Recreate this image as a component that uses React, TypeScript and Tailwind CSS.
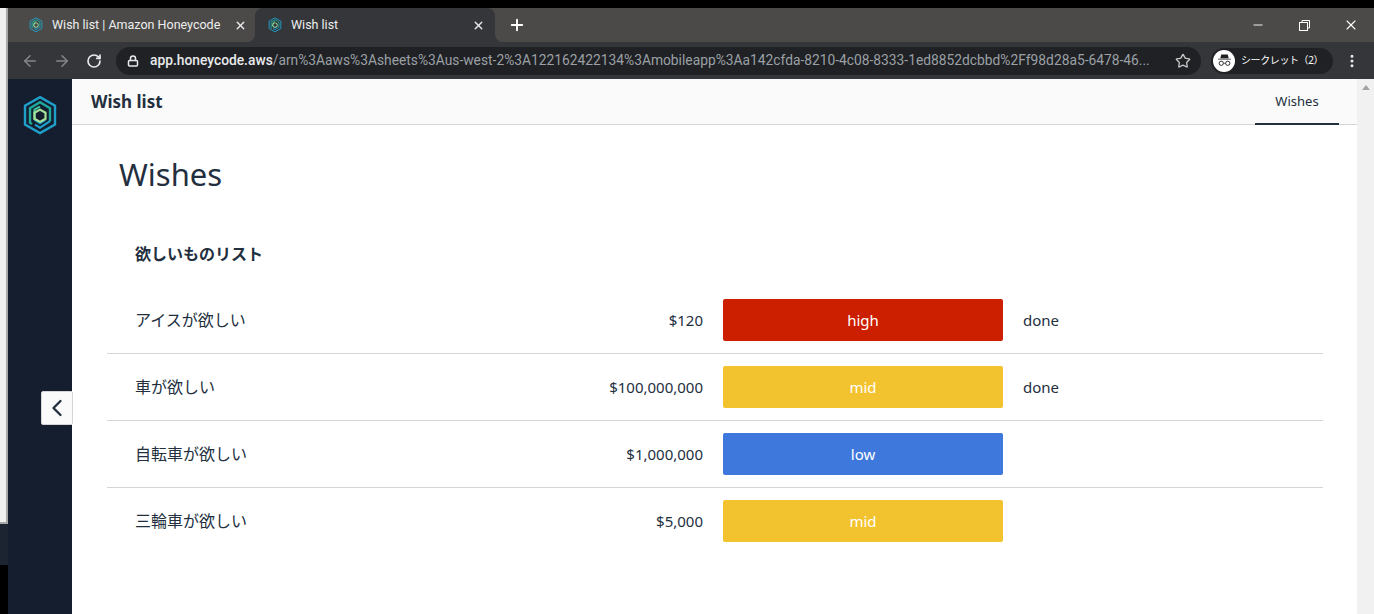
import { ArrowLeft, ArrowRight, ChevronLeft, EllipsisVertical, Lock, Minus, Plus, RotateCw, Star, X } from 'lucide-react';

const FONT = "font-['Noto_Sans','Noto_Sans_CJK_JP',sans-serif]";

const rows = [
  { name: 'アイスが欲しい', price: '$120', level: 'high', color: 'bg-[#cc1f00]', done: true },
  { name: '車が欲しい', price: '$100,000,000', level: 'mid', color: 'bg-[#f3c32f]', done: true },
  { name: '自転車が欲しい', price: '$1,000,000', level: 'low', color: 'bg-[#3e78dc]', done: false },
  { name: '三輪車が欲しい', price: '$5,000', level: 'mid', color: 'bg-[#f3c32f]', done: false },
];

function HexLogo({ size }: { size: number }) {
  return (
    <svg width={size} height={size * 1.12} viewBox="0 0 36 40" fill="none">
      <path d="M18 2 L33 10.5 V29.5 L18 38 L3 29.5 V10.5 Z" stroke="#1f9fc9" strokeWidth="2.4" />
      <path d="M10 29 L8 27.5 V13 L18 7 L28 13 V26" stroke="#1fa89c" strokeWidth="2.4" />
      <path d="M12.5 24.5 L18 28 L23.5 24.5 M28 26 L18 32.5 L13 29.5" stroke="#1f9fc9" strokeWidth="2.2" />
      <path d="M12.5 24.5 V14.5 L18 11.5" stroke="#3fc6a0" strokeWidth="2.2" />
      <path d="M18 14.5 L23.5 17.6 V23.6 L18 26.7 L12.5 23.6 V17.6 Z" stroke="#a6e29a" strokeWidth="2.2" />
    </svg>
  );
}

function Tab({ title, active }: { title: string; active?: boolean }) {
  return (
    <div
      className={`relative flex items-center h-[34px] font-['Roboto',sans-serif] text-[12.5px] text-[#eeeeee] ${
        active ? 'w-[240px] pl-[13px] pr-[10px] bg-[#35363a] rounded-t-lg' : 'w-[247px] pl-[21px] pr-[8px]'
      }`}
    >
      <HexLogo size={14} />
      <span className="ml-[9px] flex-1 whitespace-nowrap pt-[1px]">{title}</span>
      <X size={13} strokeWidth={2.5} className="text-[#e8eaed]" />
      {active && (
        <>
          <div className="absolute -left-[8px] bottom-0 w-[8px] h-[8px] bg-[#35363a]">
            <div className="w-full h-full bg-[#4b4a48] rounded-br-lg" />
          </div>
          <div className="absolute -right-[8px] bottom-0 w-[8px] h-[8px] bg-[#35363a]">
            <div className="w-full h-full bg-[#4b4a48] rounded-bl-lg" />
          </div>
        </>
      )}
    </div>
  );
}

function ChromeBar() {
  return (
    <div className="shrink-0">
      <div className="h-[34px] bg-[#4b4a48] flex items-center">
        <Tab title="Wish list | Amazon Honeycode" />
        <Tab title="Wish list" active />
        <Plus size={18} strokeWidth={2.5} className="ml-[13px] text-white" />
        <div className="flex-1" />
        <Minus size={14} strokeWidth={1.6} className="text-white" />
        <svg width="11" height="11" viewBox="0 0 11 11" fill="none" stroke="white" className="ml-[34px]">
          <rect x="0.5" y="2.5" width="8" height="8" />
          <path d="M3 2.5 V0.5 H10.5 V8 H8.5" />
        </svg>
        <X size={16} strokeWidth={1.6} className="ml-[33px] mr-[15px] text-white" />
      </div>
      <div className="h-[37px] bg-[#35363a] flex items-center">
        <ArrowLeft size={18} className="ml-[13px] text-[#85878a]" />
        <ArrowRight size={18} className="ml-[14px] text-[#85878a]" />
        <RotateCw size={16} strokeWidth={2.5} className="ml-[15px] text-[#e8eaed]" />
        <div className="ml-[14px] h-[28px] w-[1085px] rounded-full bg-[#202124] flex items-center pl-[11px] pr-[10px] font-['Roboto',sans-serif] text-[13.8px]">
          <Lock size={12} strokeWidth={3} className="text-[#e8eaed] shrink-0" />
          <span className="ml-[11px] flex-1 min-w-0 overflow-hidden whitespace-nowrap text-[#9aa0a6]">
            <span className="text-[#e8eaed] font-medium">app.honeycode.aws</span>
            /arn%3Aaws%3Asheets%3Aus-west-2%3A122162422134%3Amobileapp%3Aa142cfda-8210-4c08-8333-1ed8852dcbbd%2Ff98d28a5-6478-46...
          </span>
          <Star size={16} className="ml-[16px] text-[#c4c7c5] shrink-0" />
        </div>
        <div className="ml-[10px] h-[26px] w-[122px] rounded-full bg-[#202124] flex items-center pl-[2px] text-[10px] tracking-[-0.4px] text-white">
          <div className="w-[22px] h-[22px] rounded-full bg-white flex items-center justify-center">
            <svg width="15" height="13" viewBox="0 0 16 14" fill="none">
              <path d="M4.5 0.5 H11.5 L12.5 4.5 H3.5 Z M1 5 H15 V6 H1 Z" fill="#202124" />
              <circle cx="4.5" cy="10" r="2.3" stroke="#202124" strokeWidth="1" />
              <circle cx="11.5" cy="10" r="2.3" stroke="#202124" strokeWidth="1" />
              <path d="M7 10 H9" stroke="#202124" strokeWidth="0.8" />
            </svg>
          </div>
          <span className="ml-[6px] whitespace-nowrap">シークレット（2）</span>
        </div>
        <EllipsisVertical size={16} strokeWidth={2.5} className="ml-[11px] text-[#e8eaed]" />
      </div>
    </div>
  );
}

function WishRow({ name, price, level, color, done, last }: (typeof rows)[number] & { last: boolean }) {
  return (
    <div className={`h-[67px] flex items-center pl-[28px] text-[15px] text-[#232f3e] border-b ${last ? 'border-transparent' : 'border-[#d5d5d8]'}`}>
      <div className="w-[280px] -mt-[1px] text-[16px]">{name}</div>
      <div className="w-[288px] text-right">{price}</div>
      <div className={`ml-[20px] w-[280px] h-[42px] rounded-[2px] ${color} text-white flex items-center justify-center`}>
        {level}
      </div>
      {done && <div className="ml-[20px]">done</div>}
    </div>
  );
}

export default function App() {
  return (
    <div className={`w-[1374px] h-[614px] overflow-hidden flex bg-black ${FONT}`}>
      <div className="w-[8px] shrink-0 flex flex-col pt-[8px]">
        <div className="h-[516px] bg-[#f0f0f0] border-r-2 border-b-2 border-[#a8a8a8]" />
        <div className="h-[41px] bg-[#1b2430]" />
      </div>
      <div className="flex-1 flex flex-col min-w-0">
        <div className="h-[8px] bg-black shrink-0" />
        <ChromeBar />
        <div className="flex-1 flex min-h-0">
          <div className="relative w-[64px] shrink-0 bg-[#151e2e] flex justify-center pt-[16px]">
            <HexLogo size={36} />
            <button className="absolute left-[33px] top-[312px] w-[32px] h-[34px] bg-[#fafafa] border border-[#d5d5d8] rounded-[2px] flex items-center justify-center text-[#232f3e]">
              <ChevronLeft size={28} strokeWidth={2} />
            </button>
          </div>
          <div className="flex-1 bg-white min-w-0 flex flex-col">
            <div className="h-[46px] shrink-0 bg-[#fafafa] border-b border-[#d5d5d8] flex items-stretch pl-[19px] pr-[18px]">
              <div className="flex-1 self-center text-[17px] font-bold text-[#232f3e]">Wish list</div>
              <div className="w-[84px] border-b-2 border-[#232f3e] -mb-[1px] pt-[2px] flex items-center justify-center text-[13px] text-[#232f3e]">
                Wishes
              </div>
            </div>
            <div className="pl-[35px] pr-[34px]">
              <h1 className="pl-[12px] pt-[25px] text-[31px] leading-[48px] text-[#232f3e]">Wishes</h1>
              <div className="pl-[28px] mt-[44px] h-[24px] leading-[24px] text-[16px] font-bold text-[#232f3e]">欲しいものリスト</div>
              <div className="mt-[21px]">
                {rows.map((r, i) => (
                  <WishRow key={r.name} {...r} last={i === rows.length - 1} />
                ))}
              </div>
            </div>
          </div>
          <div className="w-[17px] shrink-0 bg-[#f1f1f1] flex justify-center pt-[6px]">
            <div className="w-0 h-0 border-x-[4px] border-x-transparent border-b-[5px] border-b-[#a3a3a3]" />
          </div>
        </div>
      </div>
    </div>
  );
}
